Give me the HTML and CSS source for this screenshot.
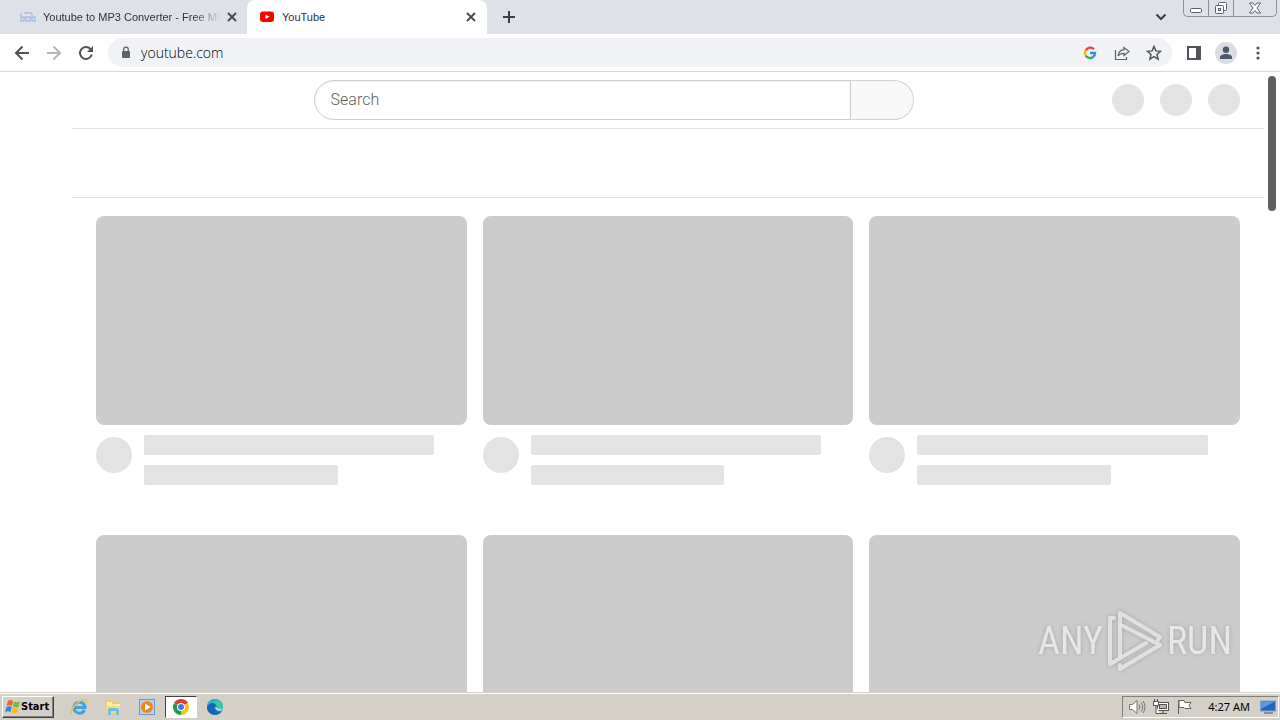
FILE: index.html
```html
<!DOCTYPE html>
<html lang="en">
<head>
<meta charset="utf-8">
<meta name="viewport" content="width=device-width, initial-scale=1">
<title>YouTube</title>
<link rel="stylesheet" href="styles.css">
</head>
<body>
<header class="browser">
  <div class="tabstrip">
    <div class="tab">
      <svg class="icon" width="16" height="16" viewBox="0 0 16 16" fill="none" stroke="#a9c0e4" stroke-width="1.5"><path d="M1 4v8h3V8H1M6 8h4v4H6zM12 4v8M12 8h3v4h-3M4 4h8"/></svg>
      <span class="tab-title fade">Youtube to MP3 Converter - Free MP</span>
      <button class="tab-close" aria-label="Close tab"><svg width="10" height="10" viewBox="0 0 10 10" stroke="#45484d" stroke-width="1.8"><path d="M1 1l8 8M9 1l-8 8"/></svg></button>
    </div>
    <div class="tab active">
      <svg class="icon" width="16" height="16" viewBox="0 0 16 16"><rect x="1" y="2.500" width="14" height="10.500" rx="3" fill="#f00"/><path d="M6.500 5.500v4.500l4-2.250z" fill="#fff"/></svg>
      <span class="tab-title">YouTube</span>
      <button class="tab-close" aria-label="Close tab"><svg width="10" height="10" viewBox="0 0 10 10" stroke="#45484d" stroke-width="1.8"><path d="M1 1l8 8M9 1l-8 8"/></svg></button>
    </div>
    <button class="new-tab" aria-label="New tab"><svg width="14" height="14" viewBox="0 0 14 14" stroke="#3c4043" stroke-width="2"><path d="M7 1v12M1 7h12"/></svg></button>
    <button class="tab-search" aria-label="Search tabs"><svg width="12" height="8" viewBox="0 0 12 8" fill="none" stroke="#3c4043" stroke-width="2"><path d="M1.500 1.500L6 6l4.500-4.500"/></svg></button>
    <div class="window-controls">
      <button class="win" aria-label="Minimize"><svg width="14" height="14" viewBox="0 0 14 14"><rect x="1.500" y="7.500" width="11" height="4" rx="1" fill="#fff" stroke="#5b606b"/></svg></button>
      <button class="win" aria-label="Restore"><svg width="14" height="14" viewBox="0 0 14 14" fill="#fff" stroke="#5b606b"><rect x="4.500" y="1.500" width="8" height="8" rx="1"/><rect x="1.500" y="4.500" width="8" height="8" rx="1"/><rect x="4.500" y="7.500" width="2" height="2"/></svg></button>
      <button class="win win-close" aria-label="Close"><svg width="14" height="14" viewBox="0 0 14 14"><path d="M1.500 2h3.500l2 2.500L9 2h3.500L9 7l3.500 5H9L7 9.500 5 12H1.500L5 7z" fill="#fff" stroke="#5b606b"/></svg></button>
    </div>
  </div>
  <div class="toolbar">
    <button class="nav" aria-label="Back"><svg width="16" height="16" viewBox="0 0 16 16" fill="none" stroke="#505357" stroke-width="2"><path d="M15 8H2M8.500 1.500L2 8l6.500 6.500"/></svg></button>
    <button class="nav" aria-label="Forward"><svg width="16" height="16" viewBox="0 0 16 16" fill="none" stroke="#b5b7ba" stroke-width="2"><path d="M1 8h13M7.500 1.500L14 8l-6.500 6.500"/></svg></button>
    <button class="nav" aria-label="Reload"><svg width="16" height="16" viewBox="0 0 16 16" fill="none" stroke="#505357" stroke-width="2"><path d="M13.800 9.500A6 6 0 1 1 12.500 4L14 5.500"/><path d="M15 1v6H9z" fill="#505357" stroke="none"/></svg></button>
    <div class="omnibox">
      <svg width="12" height="14" viewBox="0 0 12 14"><rect x="2" y="5" width="8" height="7" rx="1" fill="#5f6368"/><path d="M3.700 5V3.500a2.300 2.300 0 0 1 4.600 0V5" fill="none" stroke="#5f6368" stroke-width="1.300"/></svg>
      <input class="address" type="text" value="youtube.com" aria-label="Address">
      <button class="act" aria-label="Google"><svg width="14" height="14" viewBox="0 0 14 14" fill="none" stroke-width="2.400"><path d="M11 3.300A5 5 0 0 0 2.700 4.500" stroke="#ea4335"/><path d="M2.700 4.500a5 5 0 0 0 0 5" stroke="#fbbc05"/><path d="M2.700 9.500a5 5 0 0 0 7.600 1.300" stroke="#34a853"/><path d="M10.300 10.800A5 5 0 0 0 12 7H7" stroke="#4285f4"/></svg></button>
      <button class="act" aria-label="Share"><svg width="16" height="16" viewBox="0 0 16 16" fill="none" stroke="#5f6368" stroke-width="1.200"><path d="M1.500 5v9.500h11V12"/><path d="M10 2.500l5 4-5 4V8.300C7 8.300 5.500 9 4 11 4.500 7.500 6.500 5 10 4.700z"/></svg></button>
      <button class="act" aria-label="Bookmark"><svg width="16" height="16" viewBox="0 0 16 16" fill="none" stroke="#505357" stroke-width="1.500"><path d="M8 1.500l1.900 4.400 4.700.4-3.600 3.100 1.100 4.700L8 11.600l-4.100 2.500L5 9.400 1.400 6.300l4.700-.4z"/></svg></button>
    </div>
    <button class="nav" aria-label="Side panel"><svg width="14" height="14" viewBox="0 0 14 14"><rect x="1" y="1" width="12" height="12" fill="none" stroke="#505357" stroke-width="2"/><path d="M9 1h4v12H9z" fill="#505357"/></svg></button>
    <button class="nav" aria-label="Profile"><svg width="22" height="22" viewBox="0 0 22 22"><circle cx="11" cy="11" r="11" fill="#dadde3"/><circle cx="11" cy="7.700" r="3.200" fill="#4d586c"/><path d="M5 17v-2c0-2 3.500-3 6-3s6 1 6 3v2z" fill="#4d586c"/></svg></button>
    <button class="nav" aria-label="Menu"><svg width="4" height="14" viewBox="0 0 4 14" fill="#505357"><circle cx="2" cy="2" r="1.600"/><circle cx="2" cy="7" r="1.600"/><circle cx="2" cy="12" r="1.600"/></svg></button>
  </div>
</header>
<main class="viewport">
  <div class="page">
    <div class="masthead">
      <form class="search">
        <input class="search-box" type="text" placeholder="Search" aria-label="Search">
        <button class="search-button" type="button" aria-label="Submit search"></button>
      </form>
      <div class="masthead-end"><span class="dot"></span><span class="dot"></span><span class="dot"></span></div>
    </div>
    <div class="chips"></div>
    <div class="grid">
      <article><div class="thumb"></div><div class="details"><span class="avatar"></span><div class="lines"><div class="line"></div><div class="line short"></div></div></div></article>
      <article><div class="thumb"></div><div class="details"><span class="avatar"></span><div class="lines"><div class="line"></div><div class="line short"></div></div></div></article>
      <article><div class="thumb"></div><div class="details"><span class="avatar"></span><div class="lines"><div class="line"></div><div class="line short"></div></div></div></article>
      <article><div class="thumb"></div></article>
      <article><div class="thumb"></div></article>
      <article><div class="thumb"></div></article>
    </div>
  </div>
  <div class="scroll"><div class="scroll-thumb"></div></div>
  <div class="watermark">
    <span>ANY</span>
    <svg width="56" height="64" viewBox="0 0 56 64" fill="none" stroke="#e9e9e9" stroke-opacity=".85" stroke-width="4" stroke-linejoin="round" stroke-linecap="round"><path d="M13 47V4l40 24-2 3"/><path d="M14 16l39 20-40 24v-4"/><path d="M7 9H3v46l36-21"/></svg>
    <span>RUN</span>
  </div>
</main>
<footer class="taskbar">
  <button class="start"><svg width="16" height="16" viewBox="0 0 16 16"><path d="M3 2q3-2 5 0L7 7Q4 5.500 1.500 7z" fill="#ee6427"/><path d="M9 2.500q3 1.500 6 0L13.500 8Q11 9 8 7.500z" fill="#79b83d"/><path d="M1.500 8Q4 6.500 6.800 8l-1.300 5Q3 11.500 0 13z" fill="#3f82d4"/><path d="M8 8.500q3 1.500 5.500.5L12 14q-3 1.200-5.500-.500z" fill="#f4bd28"/></svg>Start</button>
  <nav class="quick">
    <button class="task" aria-label="Internet Explorer"><svg width="18" height="18" viewBox="0 0 18 18" fill="none"><path d="M14.500 12A5.500 5.500 0 1 1 15 9.500H5" stroke="#3ba4e4" stroke-width="3"/><path d="M2 16C-1 13 7 3 14 1.500c4-.5 2.500 2.500 1.500 4" stroke="#eec04a" stroke-width="1.500"/></svg></button>
    <button class="task" aria-label="Explorer"><svg width="18" height="18" viewBox="0 0 18 18"><path d="M1 2h6l1 2h8v11H1z" fill="#edce6b"/><path d="M3 4h5v2h8v3H3z" fill="#fff0b1"/><path d="M2 8h14v7H2z" fill="#f5da80"/><path d="M4 17v-5q0-2 2-2h7q2 0 2 2v5h-3v-4H7v4z" fill="#75bde0"/></svg></button>
    <button class="task" aria-label="Media Player"><svg width="18" height="18" viewBox="0 0 18 18"><rect x="1.500" y="1.500" width="15" height="15" fill="#b5d3ed" stroke="#6a9bc8"/><circle cx="9" cy="9" r="6" fill="#f18618"/><path d="M7 5.500v7L12.500 9z" fill="#fff"/></svg></button>
    <button class="task current" aria-label="Chrome"><svg width="18" height="18" viewBox="0 0 18 18"><path d="M9 9L2.100 5A8 8 0 0 1 15.900 5z" fill="#e33b2e"/><path d="M9 9L15.900 5A8 8 0 0 1 9 17z" fill="#fbc116"/><path d="M9 9v8A8 8 0 0 1 2.100 5z" fill="#229c4c"/><circle cx="9" cy="9" r="4" fill="#fff"/><circle cx="9" cy="9" r="3" fill="#3e7de8"/></svg></button>
    <button class="task" aria-label="Edge"><svg width="18" height="18" viewBox="0 0 18 18"><circle cx="9" cy="9" r="8" fill="#147fcb"/><path d="M1 9a8 8 0 0 1 16 0c0 3-4 4-6 2 2-4-5-7-10-2z" fill="#39c7a4"/><path d="M1 9c0-6 7-9 12-6-4-1-9 1-12 6z" fill="#2ba6dd"/><path d="M1 9c2-5 9-5 9-1-3 0-4 6 5 6-4 5-14 3-14-5z" fill="#1566b5"/><path d="M9.500 8.500c-1 3 2 5 6 4l1-2c-3 1-5 0-5.500-1z" fill="#d4d0c8"/></svg></button>
  </nav>
  <div class="tray">
    <svg width="18" height="16" viewBox="0 0 18 16" fill="none" stroke="#77756f"><path d="M1.500 5.500h3L9 1.500v13l-4.500-4h-3z" fill="#fff"/><path d="M11 5.500q2 2.500 0 5M13 3.500q3.500 4.500 0 9M15 2q4 6 0 12"/></svg>
    <svg width="18" height="16" viewBox="0 0 18 16" fill="#fff" stroke="#55534f"><rect x="5.500" y="3.500" width="11" height="8"/><rect x="7.500" y="5.500" width="7" height="4" fill="#b9b7b2"/><path d="M8 14.500h7M11 12v2M1.500 2.500h5v4h-5zM2.500 0v2M5.500 0v2M4 7v7.500h4"/></svg>
    <svg width="18" height="16" viewBox="0 0 18 16" fill="#fff" stroke="#66645f"><path d="M2.500 1v14M3 1.500h5l1 2h6l-2 3 2 3H9l-1-1H3z"/></svg>
    <time class="clock">4:27 AM</time>
    <svg width="16" height="14" viewBox="0 0 16 14"><rect x=".5" y="1" width="15" height="10" fill="#2367c0" stroke="#7f9fc8"/><path d="M1 1.500h14L1 9z" fill="#5a99df"/><path d="M4 13h9" stroke="#3c4d65"/></svg>
  </div>
</footer>
</body>
</html>
```
FILE: styles.css
```css
* { box-sizing: border-box; }
body {
  margin: 0;
  height: 100vh;
  display: flex;
  flex-direction: column;
  overflow: hidden;
  background: #fff;
  font-family: "Noto Sans", sans-serif;
}
button {
  border: 0;
  padding: 0;
  margin: 0;
  background: none;
  display: flex;
  align-items: center;
  justify-content: center;
  font: inherit;
}
svg { display: block; flex: none; }

.tabstrip {
  display: flex;
  align-items: center;
  height: 34px;
  background: #dee1e8;
}
.tab {
  display: flex;
  align-items: center;
  width: 240px;
  height: 34px;
  padding: 0 10px 0 12px;
  font: 11px/16px "Liberation Sans", sans-serif;
  color: #303236;
}
.tab:first-child { margin-left: 7px; padding: 0 9px 0 13px; }
.tab .icon { margin-right: 7px; }
.tab-title {
  flex: 1;
  overflow: hidden;
  white-space: nowrap;
}
.fade { mask-image: linear-gradient(to right, #000 85%, transparent); }
.tab-close { width: 12px; height: 16px; margin-left: 6px; }
.active { background: #fff; border-radius: 8px 8px 0 0; }
.new-tab { width: 28px; height: 28px; margin-left: 8px; }
.tab-search { width: 28px; height: 28px; margin-left: auto; }
.window-controls {
  display: flex;
  align-self: flex-start;
  height: 17px;
  margin: 0 3px 0 8px;
  border: 1px solid #8b909a;
  border-top: 0;
  border-radius: 0 0 5px 5px;
}
.win { width: 25px; height: 16px; border-right: 1px solid #8b909a; }
.win-close { width: 42px; border-right: 0; }

.toolbar {
  display: flex;
  align-items: center;
  height: 38px;
  padding: 0 6px;
  background: #fff;
  border-bottom: 1px solid #d9dadc;
}
.nav { width: 32px; height: 32px; }
.omnibox {
  flex: 1;
  display: flex;
  align-items: center;
  height: 29px;
  margin: 0 6px;
  padding: 0 2px 0 12px;
  background: #f0f2f5;
  border-radius: 15px;
}
.address {
  flex: 1;
  min-width: 0;
  height: 28px;
  padding: 0;
  margin-left: 9px;
  border: 0;
  background: none;
  font: 300 14px/20px "Open Sans", sans-serif;
  color: #000;
}
.act { width: 32px; height: 28px; }

.viewport {
  flex: 1;
  min-height: 0;
  display: flex;
  position: relative;
  overflow: hidden;
}
.page { flex: 1; padding-left: 72px; }
.masthead {
  display: grid;
  grid-template-columns: 2fr 600px 3fr;
  align-items: center;
  height: 57px;
  padding: 0 24px;
  border-bottom: 1px solid #e2e2e2;
}
.search { display: flex; grid-column: 2; height: 40px; }
.search-box {
  flex: 1;
  min-width: 0;
  padding: 0 16px;
  border: 1px solid #ccc;
  border-radius: 20px 0 0 20px;
  box-shadow: inset 0 1px 2px #eee;
  font: 300 16px/24px Roboto, sans-serif;
}
.search-box::placeholder { color: #606060; opacity: 1; }
.search-button {
  width: 63px;
  background: #f8f8f8;
  border: 1px solid #d3d3d3;
  border-left: 0;
  border-radius: 0 20px 20px 0;
}
.masthead-end { display: flex; gap: 16px; justify-content: flex-end; }
.dot { width: 32px; height: 32px; border-radius: 50%; background: #e3e3e3; }
.chips { height: 69px; border-bottom: 1px solid #e2e2e2; }
.grid {
  display: grid;
  grid-template-columns: repeat(3, 1fr);
  gap: 50px 16px;
  padding: 18px 24px 0;
}
.thumb { aspect-ratio: 371 / 209; border-radius: 8px; background: #ccc; }
.details { display: flex; gap: 12px; padding-top: 10px; }
.avatar { width: 36px; height: 36px; margin-top: 2px; border-radius: 50%; background: #e3e3e3; }
.lines { flex: 1; display: grid; gap: 10px; }
.line { width: 90%; height: 20px; border-radius: 2px; background: #e3e3e3; }
.short { width: 60%; }
.scroll { width: 16px; padding: 4px; }
.scroll-thumb { height: 135px; border-radius: 4px; background: #606060; }
.watermark {
  position: absolute;
  right: 48px;
  bottom: 19px;
  display: flex;
  align-items: center;
  gap: 4px;
  font: 38px/64px "Liberation Sans Narrow", "Roboto Condensed", "Open Sans Condensed", sans-serif;
  color: rgba(240, 240, 240, .85);
  filter: drop-shadow(0 0 2px rgba(100, 100, 100, .45));
}

.taskbar {
  display: flex;
  align-items: center;
  height: 28px;
  padding: 1px 1px 0 2px;
  background: #d4d0c8;
  border-top: 1px solid #d4d0c8;
  box-shadow: inset 0 1px #fff;
  font: 11px/16px "DejaVu Sans Condensed", sans-serif;
  color: #000;
}
.start {
  height: 22px;
  padding: 0 4px 0 2px;
  border: 1px solid;
  border-color: #fff #404040 #404040 #fff;
  box-shadow: inset -1px -1px #808080;
  font-weight: bold;
}
.quick { display: flex; gap: 2px; margin-left: 9px; }
.task { width: 32px; height: 22px; }
.current {
  background: #fff;
  border: 1px solid;
  border-color: #404040 #fff #fff #404040;
}
.tray {
  display: flex;
  align-items: center;
  gap: 6px;
  height: 22px;
  margin-left: auto;
  padding: 0 2px 0 5px;
  border: 1px solid;
  border-color: #808080 #fff #fff #808080;
}
.clock { margin: 0 4px 0 8px; font-family: "Noto Sans", sans-serif; }
```
